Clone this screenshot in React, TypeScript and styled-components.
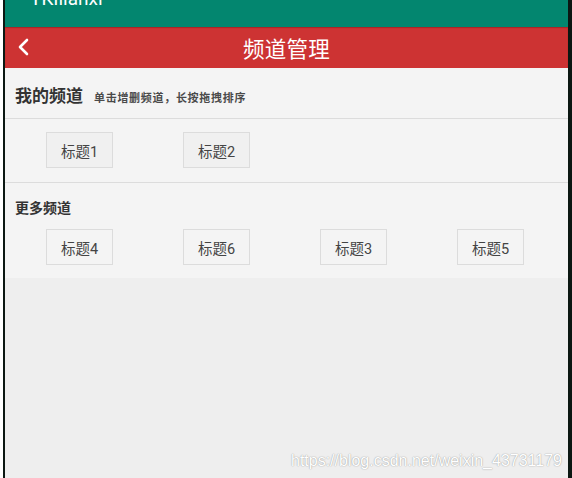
import React from "react";
import styled, { createGlobalStyle } from "styled-components";

const GlobalStyle = createGlobalStyle`
  html, body {
    margin: 0;
    padding: 0;
    background: #0b1712;
  }
  body {
    font-family: Roboto, "Noto Sans CJK SC", sans-serif;
  }
`;

const Screen = styled.div`
  display: flex;
  width: 572px;
  height: 478px;
  overflow: hidden;
`;

const Desktop = styled.div`
  width: 3px;
  background: #ffffff;
  flex-shrink: 0;
`;

const Frame = styled.div`
  width: 2px;
  background: #0b1712;
  flex-shrink: 0;
`;

const Phone = styled.div`
  position: relative;
  display: flex;
  flex-direction: column;
  width: 563px;
  background: #eeeeee;
`;

const StatusBar = styled.div`
  height: 27px;
  background: #03866f;
  overflow: hidden;
  padding-left: 25px;
`;

const AppName = styled.div`
  color: #ffffff;
  font-size: 19px;
  line-height: 20px;
  margin-top: -11px;
`;

const TitleBar = styled.div`
  height: 41px;
  background: #cd3333;
  box-shadow: inset 0 1px 1px rgba(120, 20, 20, 0.45);
  display: flex;
  align-items: center;
  justify-content: center;
  position: relative;
`;

const BackButton = styled.div`
  position: absolute;
  left: 8px;
  top: 11px;
  width: 20px;
  height: 18px;
  display: flex;
  align-items: center;
  justify-content: center;
`;

const Title = styled.div`
  color: #ffffff;
  font-size: 21.5px;
  font-family: "Noto Sans CJK SC", sans-serif;
  letter-spacing: 0.3px;
`;

const Panel = styled.div`
  background: #f4f4f4;
  padding-bottom: 13px;
`;

const SectionHead = styled.div`
  display: flex;
  align-items: baseline;
  gap: 11px;
  padding: 14px 10px 0;
  height: 36px;
  box-sizing: border-box;
`;

const HeadTitle = styled.span<{ $small?: boolean }>`
  font-family: "Noto Sans CJK SC", sans-serif;
  font-weight: bold;
  font-size: ${(p) => (p.$small ? "14px" : "17px")};
  color: #333333;
`;

const HeadHint = styled.span`
  font-family: "Noto Sans CJK SC", sans-serif;
  font-weight: bold;
  font-size: 11px;
  letter-spacing: 0.7px;
  color: #4a4a4a;
`;

const Divider = styled.div`
  height: 1px;
  background: #dcdcdc;
  margin: 14px 0 0;
`;

const Grid = styled.div<{ $top: number }>`
  display: grid;
  grid-template-columns: repeat(4, 137px);
  padding: ${(p) => p.$top}px 9px 0 6px;
`;

const Chip = styled.div`
  justify-self: center;
  width: 67px;
  height: 36px;
  box-sizing: border-box;
  border: 1px solid #dcdcdc;
  background: #f0f0f0;
  display: flex;
  align-items: center;
  justify-content: center;
  font-size: 14.5px;
  color: #444444;
  font-family: Roboto, "Noto Sans CJK SC", sans-serif;
`;

const MoreChip = styled(Chip)`
  background: #f4f4f4;
`;

const Watermark = styled.div`
  position: absolute;
  right: 6px;
  bottom: 8px;
  color: #ffffff;
  font-family: "Liberation Sans", Arial, sans-serif;
  font-size: 16px;
  text-shadow: 0 0 1px rgba(0, 0, 0, 0.35), 0 0 2px rgba(0, 0, 0, 0.15);
`;

const mine = ["标题1", "标题2"];
const more = ["标题4", "标题6", "标题3", "标题5"];

function App() {
  return (
    <>
      <GlobalStyle />
      <Screen>
        <Desktop />
        <Frame />
        <Phone>
          <StatusBar>
            <AppName>YKIlianxi</AppName>
          </StatusBar>
          <TitleBar>
            <BackButton>
              <svg width="12" height="18" viewBox="0 0 12 18">
                <path
                  d="M10 2 L3 9 L10 16"
                  stroke="#ffffff"
                  strokeWidth="2.6"
                  fill="none"
                  strokeLinecap="round"
                  strokeLinejoin="round"
                />
              </svg>
            </BackButton>
            <Title>频道管理</Title>
          </TitleBar>
          <Panel>
            <SectionHead>
              <HeadTitle>我的频道</HeadTitle>
              <HeadHint>单击增删频道，长按拖拽排序</HeadHint>
            </SectionHead>
            <Divider />
            <Grid $top={13}>
              {mine.map((t) => (
                <Chip key={t}>{t}</Chip>
              ))}
            </Grid>
            <Divider />
            <SectionHead>
              <HeadTitle $small>更多频道</HeadTitle>
            </SectionHead>
            <Grid $top={10}>
              {more.map((t) => (
                <MoreChip key={t}>{t}</MoreChip>
              ))}
            </Grid>
          </Panel>
          <Watermark>https://blog.csdn.net/weixin_43731179</Watermark>
        </Phone>
      </Screen>
    </>
  );
}

export default App;
